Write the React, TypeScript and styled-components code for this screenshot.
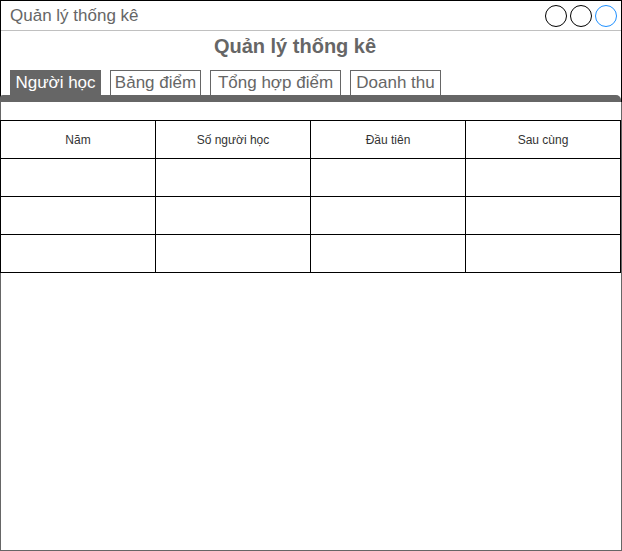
import styled, { createGlobalStyle } from 'styled-components';

const GlobalStyle = createGlobalStyle`
  html, body {
    margin: 0;
    padding: 0;
    background: #fff;
  }
  * {
    box-sizing: border-box;
  }
`;

// Khung cửa sổ chính
const Window = styled.div`
  width: 622px;
  height: 551px;
  display: flex;
  flex-direction: column;
  font-family: "Liberation Sans", Arial, sans-serif;
  color: #666;
`;

// Phần trên có viền đen
const Top = styled.div`
  border: 1px solid #000;
  border-bottom: none;
  display: flex;
  flex-direction: column;
`;

const TitleBar = styled.div`
  height: 30px;
  display: flex;
  align-items: center;
  justify-content: space-between;
  padding: 0 4px 0 9px;
  border-bottom: 1px solid #c0c0c0;
  font-size: 17px;
`;

const Controls = styled.div`
  display: flex;
  gap: 3px;
`;

const Circle = styled.span<{ $color: string }>`
  width: 22px;
  height: 22px;
  border-radius: 50%;
  border: 1.5px solid ${(p) => p.$color};
`;

const Heading = styled.h1`
  margin: 3px 0 12px;
  padding-right: 32px;
  font-size: 20px;
  line-height: 24px;
  font-weight: bold;
  text-align: center;
  color: #666;
`;

const TabRow = styled.div`
  display: flex;
  gap: 9px;
  padding-left: 9px;
`;

const Tab = styled.div<{ $active?: boolean; $width: number }>`
  width: ${(p) => p.$width}px;
  height: 25px;
  display: flex;
  align-items: center;
  justify-content: center;
  font-size: 17px;
  white-space: nowrap;
  background: ${(p) => (p.$active ? '#666' : '#fff')};
  color: ${(p) => (p.$active ? '#fff' : '#666')};
  border: ${(p) => (p.$active ? 'none' : '1px solid #666')};
  border-bottom: none;
`;

const TabBar = styled.div`
  height: 7px;
  background: #666;
  margin: 0 0 0 -1px;
  border-radius: 3px 5px 0 0;
`;

// Phần nội dung có viền xám
const Panel = styled.div`
  flex: 1;
  border: 1px solid #666;
  border-top: none;
  padding-top: 18px;
`;

const Table = styled.table`
  width: calc(100% + 1px);
  margin-left: -1px;
  border-collapse: collapse;
  table-layout: fixed;
`;

const Th = styled.th`
  height: 38px;
  border: 1px solid #000;
  font-size: 12px;
  font-weight: normal;
  color: #333;
  text-align: center;
`;

const Td = styled.td`
  height: 38px;
  border: 1px solid #000;
`;

const columns = ['Năm', 'Số người học', 'Đầu tiên', 'Sau cùng'];
const tabs = [
  { label: 'Người học', width: 91 },
  { label: 'Bảng điểm', width: 91 },
  { label: 'Tổng hợp điểm', width: 131 },
  { label: 'Doanh thu', width: 91 },
];

const App = () => {
  return (
    <>
      <GlobalStyle />
      <Window>
        <Top>
          <TitleBar>
            <span>Quản lý thống kê</span>
            <Controls>
              <Circle $color="#000" />
              <Circle $color="#000" />
              <Circle $color="#1e90ff" />
            </Controls>
          </TitleBar>
          <Heading>Quản lý thống kê</Heading>
          <TabRow>
            {tabs.map((t, i) => (
              <Tab key={t.label} $active={i === 0} $width={t.width}>
                {t.label}
              </Tab>
            ))}
          </TabRow>
          <TabBar />
        </Top>
        <Panel>
          <Table>
            <thead>
              <tr>
                {columns.map((c) => (
                  <Th key={c}>{c}</Th>
                ))}
              </tr>
            </thead>
            <tbody>
              {[0, 1, 2].map((r) => (
                <tr key={r}>
                  {columns.map((c) => (
                    <Td key={c} />
                  ))}
                </tr>
              ))}
            </tbody>
          </Table>
        </Panel>
      </Window>
    </>
  );
};

export default App;
